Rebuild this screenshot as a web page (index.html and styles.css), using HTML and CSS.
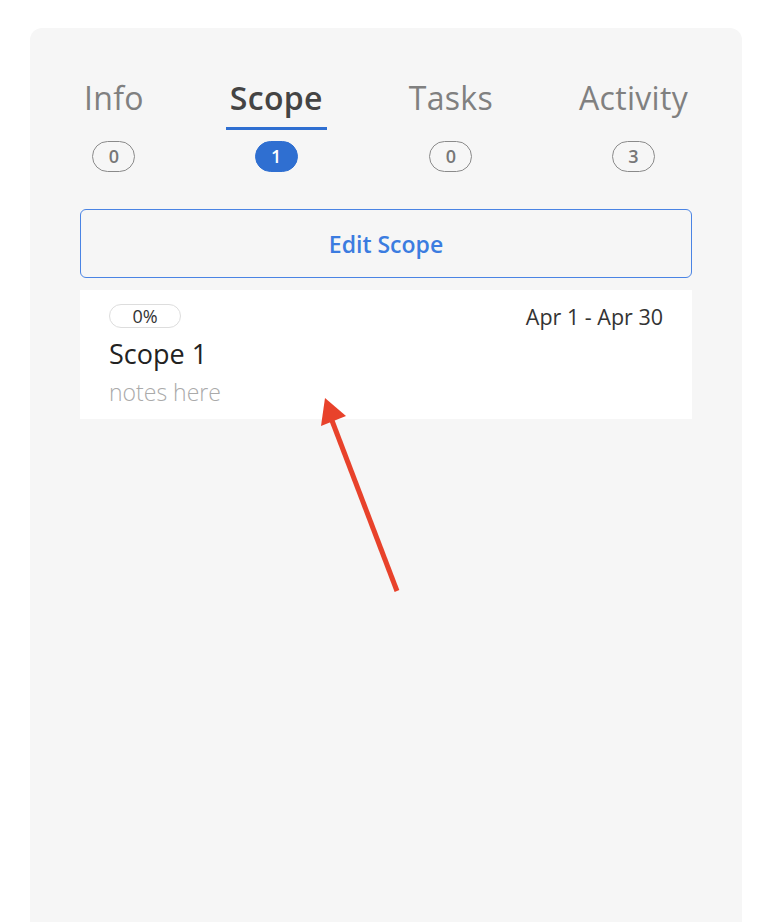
FILE: index.html
```html
<html>
    <head>
        <title>Scope</title>
        <meta name="viewport" content="width=device-width" />
        <link rel="stylesheet" href="styles.css">
    </head>
    <body>
        <div class="panel">
            <div class="tabs">
                <div class="tab">
                    <div class="tab-label">Info</div>
                    <span class="count">0</span>
                </div>
                <div class="tab active">
                    <div class="tab-label">Scope</div>
                    <span class="count">1</span>
                </div>
                <div class="tab">
                    <div class="tab-label">Tasks</div>
                    <span class="count">0</span>
                </div>
                <div class="tab">
                    <div class="tab-label">Activity</div>
                    <span class="count">3</span>
                </div>
            </div>

            <button class="edit-btn">Edit Scope</button>

            <div class="scope-card">
                <div class="scope-top">
                    <span class="progress">0%</span>
                    <span class="dates">Apr 1 - Apr 30</span>
                </div>
                <div class="scope-name">Scope 1</div>
                <div class="scope-notes">notes here</div>
            </div>
        </div>

        <svg class="annotation" width="772" height="922" viewBox="0 0 772 922">
            <line x1="397" y1="591" x2="331" y2="418" stroke="#e8422b" stroke-width="5" />
            <polygon points="325,398 321,426 346,416" fill="#e8422b" />
        </svg>
    </body>
</html>
```

FILE: styles.css
```css
html, body {
    margin: 0;
    background: #fff;
}

body {
    font-family: "Open Sans", "Liberation Sans", sans-serif;
    color: #333;
    position: relative;
}

.panel {
    margin: 28px 30px 0;
    min-height: 894px;
    background: #f6f6f6;
    border-radius: 12px 12px 0 0;
    padding: 48px 50px 0;
    box-sizing: border-box;
}

.tabs {
    display: flex;
    justify-content: space-between;
}

.tab {
    display: flex;
    flex-direction: column;
    align-items: center;
}

.tab-label {
    font-size: 32px;
    line-height: 44px;
    letter-spacing: 0.3px;
    color: #808080;
    padding: 0 4px 7px;
    border-bottom: 3px solid transparent;
}

.active .tab-label {
    color: #444;
    font-weight: 600;
    border-bottom-color: #2f6fd1;
}

.count {
    margin-top: 11px;
    width: 43px;
    height: 31px;
    box-sizing: border-box;
    border: 1px solid #8a8a8a;
    border-radius: 16px;
    font-size: 18px;
    font-weight: 600;
    line-height: 29px;
    text-align: center;
    color: #777;
}

.active .count {
    background: #2f6fd1;
    border-color: #2f6fd1;
    color: #fff;
}

.edit-btn {
    display: block;
    width: 100%;
    height: 69px;
    margin-top: 37px;
    background: transparent;
    border: 1px solid #4a84e4;
    border-radius: 6px;
    font-family: inherit;
    font-size: 23px;
    font-weight: 600;
    color: #3b7ce0;
}

.scope-card {
    margin-top: 12px;
    background: #fff;
    padding: 14px 29px 12px;
}

.scope-top {
    display: flex;
    justify-content: space-between;
    align-items: center;
    height: 24px;
}

.progress {
    width: 72px;
    height: 24px;
    box-sizing: border-box;
    border: 1px solid #ddd;
    border-radius: 12px;
    font-size: 18px;
    line-height: 22px;
    text-align: center;
    color: #333;
}

.dates {
    font-size: 21.5px;
    color: #333;
}

.scope-name {
    margin-top: 8px;
    font-size: 27px;
    line-height: 36px;
    color: #222;
}

.scope-notes {
    margin-top: 5px;
    font-size: 23px;
    line-height: 30px;
    font-weight: 300;
    color: #aaa;
}

.annotation {
    position: absolute;
    top: 0;
    left: 0;
    pointer-events: none;
}
```
